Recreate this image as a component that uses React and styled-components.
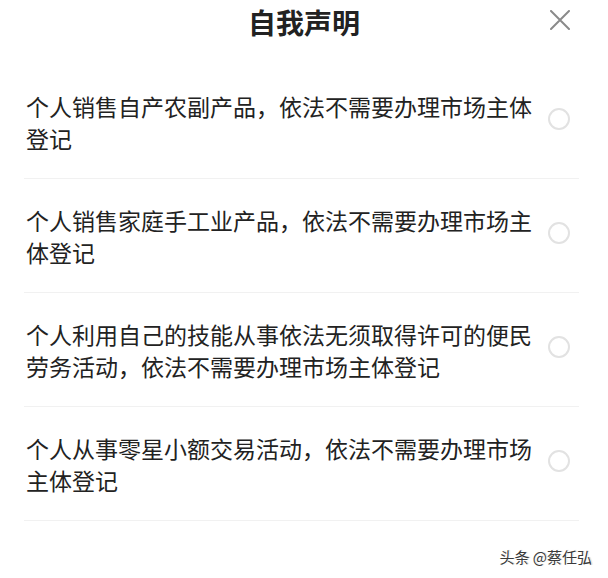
import React from "react";
import styled, { createGlobalStyle } from "styled-components";

const GlobalStyle = createGlobalStyle`
  html, body { margin: 0; padding: 0; background: #ffffff; }
  body { font-family: "Noto Sans CJK SC", "Noto Sans", sans-serif; }
`;

const Page = styled.div`
  position: relative;
  width: 608px;
  height: 578px;
  background: #ffffff;
  overflow: hidden;
`;

const Header = styled.div`
  position: relative;
  height: 65px;
  display: flex;
  justify-content: center;
  align-items: flex-start;
`;

const Title = styled.h1`
  margin: 0;
  font-size: 28px;
  line-height: 44px;
  font-weight: 700;
  color: #222222;
  letter-spacing: 0;
`;

const CloseButton = styled.button`
  position: absolute;
  top: 10px;
  left: 550px;
  width: 20px;
  height: 20px;
  padding: 0;
  border: none;
  background: transparent;
  display: flex;
  align-items: center;
  justify-content: center;
`;

const List = styled.ul`
  list-style: none;
  margin: 0 29px 0 24px;
  padding: 0;
`;

const Row = styled.li`
  display: flex;
  align-items: center;
  padding: 25px 9px 24px 2px;
  border-bottom: 1px solid #f1f1f1;
`;

const Label = styled.span`
  width: 510px;
  flex: none;
  font-size: 23px;
  line-height: 32px;
  color: #222222;
`;

const Radio = styled.span`
  flex: none;
  box-sizing: border-box;
  width: 22px;
  height: 22px;
  margin-left: 12px;
  margin-bottom: 6px;
  border-radius: 50%;
  border: 2px solid #e2e2e2;
`;

const Watermark = styled.div`
  position: absolute;
  right: 16px;
  bottom: 11px;
  font-size: 15px;
  line-height: 20px;
  color: #3a3a3a;
  text-shadow: 1px 1px 0 #ffffff, -1px -1px 0 #ffffff, 1px 0 1px #bbbbbb;
`;

const items = [
  "个人销售自产农副产品，依法不需要办理市场主体登记",
  "个人销售家庭手工业产品，依法不需要办理市场主体登记",
  "个人利用自己的技能从事依法无须取得许可的便民劳务活动，依法不需要办理市场主体登记",
  "个人从事零星小额交易活动，依法不需要办理市场主体登记",
];

export default function App() {
  return (
    <Page>
      <GlobalStyle />
      <Header>
        <Title>自我声明</Title>
        <CloseButton aria-label="关闭">
          <svg width="20" height="20" viewBox="0 0 20 20">
            <path d="M1 1 L19 19 M19 1 L1 19" stroke="#8a8a8a" strokeWidth="2" strokeLinecap="round" />
          </svg>
        </CloseButton>
      </Header>
      <List>
        {items.map((t) => (
          <Row key={t}>
            <Label>{t}</Label>
            <Radio />
          </Row>
        ))}
      </List>
      <Watermark>头条 @蔡任弘</Watermark>
    </Page>
  );
}
